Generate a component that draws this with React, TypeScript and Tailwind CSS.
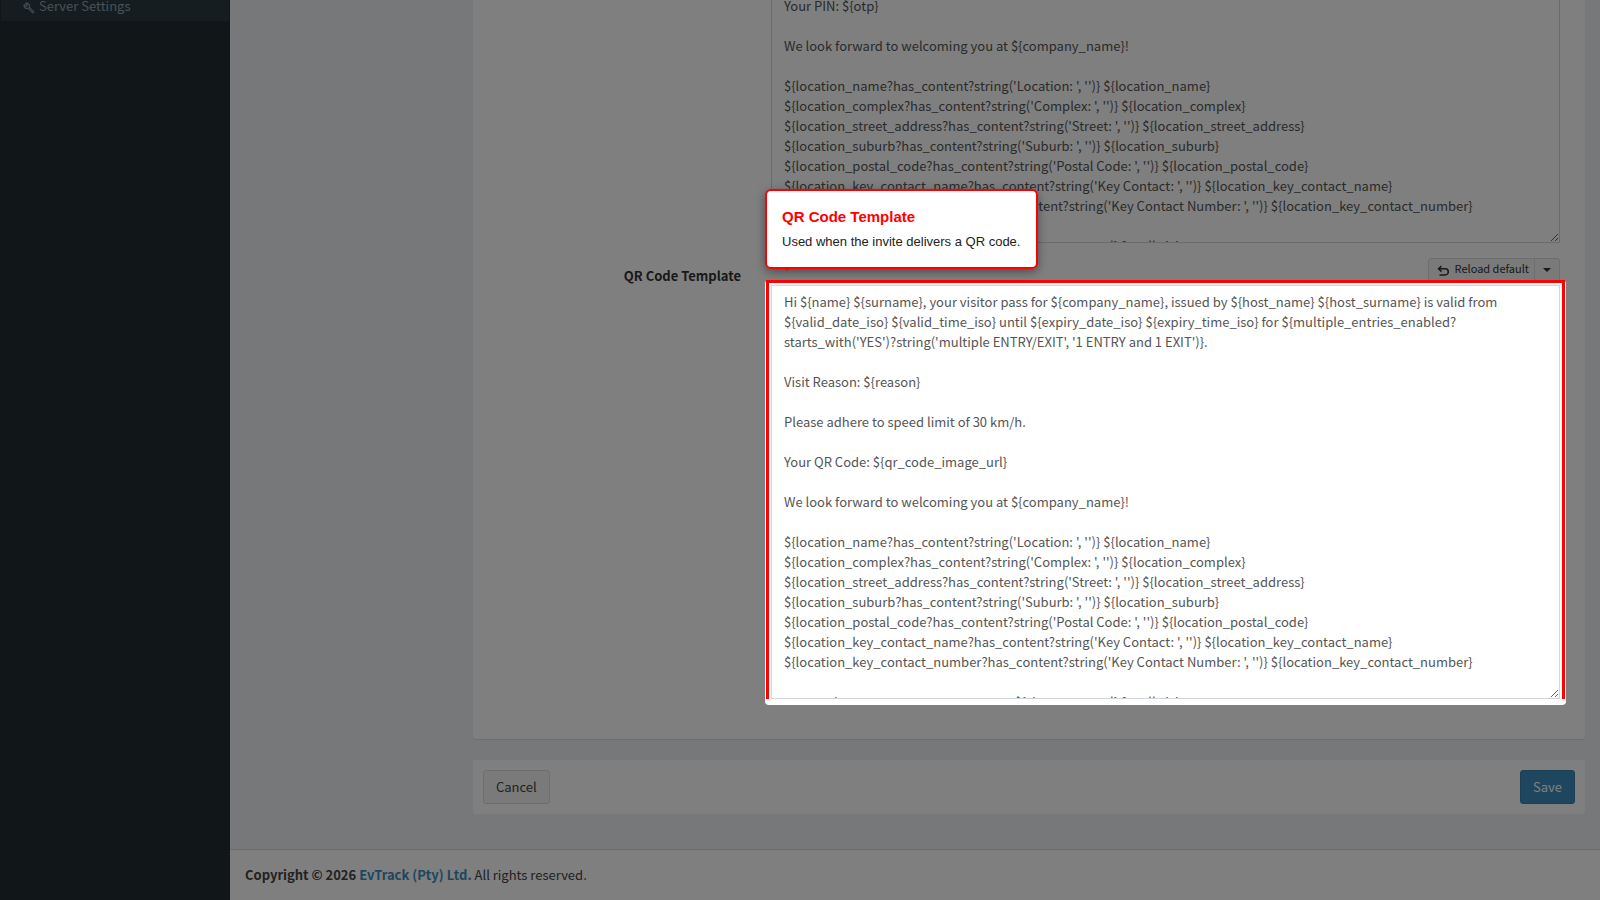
import { useState } from 'react';
import { MdOutlineBuild } from 'react-icons/md';

const sharedTail = `We look forward to welcoming you at \${company_name}!

\${location_name?has_content?string('Location: ', '')} \${location_name}
\${location_complex?has_content?string('Complex: ', '')} \${location_complex}
\${location_street_address?has_content?string('Street: ', '')} \${location_street_address}
\${location_suburb?has_content?string('Suburb: ', '')} \${location_suburb}
\${location_postal_code?has_content?string('Postal Code: ', '')} \${location_postal_code}
\${location_key_contact_name?has_content?string('Key Contact: ', '')} \${location_key_contact_name}
\${location_key_contact_number?has_content?string('Key Contact Number: ', '')} \${location_key_contact_number}

uses and entry terms are on our page: \${site_terms_url} for all visitors`;

const intro = `Hi \${name} \${surname}, your visitor pass for \${company_name}, issued by \${host_name} \${host_surname} is valid from \${valid_date_iso} \${valid_time_iso} until \${expiry_date_iso} \${expiry_time_iso} for \${multiple_entries_enabled?starts_with('YES')?string('multiple ENTRY/EXIT', '1 ENTRY and 1 EXIT')}.

Visit Reason: \${reason}

Please adhere to speed limit of 30 km/h.`;

const pinTemplate = `${intro}

Your PIN: \${otp}

${sharedTail}`;

const qrTemplate = `${intro}

Your QR Code: \${qr_code_image_url}

${sharedTail}`;

function ReloadButtons({ onReload }: { onReload: () => void }) {
  return (
    <div className="flex justify-end text-[11px] leading-[18px] text-[#333]">
      <button
        type="button"
        onClick={onReload}
        className="flex h-6 items-start gap-1.5 rounded-l-[3px] border border-[#ddd] bg-[#f4f4f4] pl-2 pr-[5px]"
      >
        <svg viewBox="0 0 12 12" className="mt-1.5 h-3 w-3" fill="none" stroke="currentColor" strokeWidth="1.5">
          <path d="M4.500 1 1.500 3.800l3 2.800M1.500 3.800H8.200a2.900 2.900 0 0 1 0 6.200H2.500" />
        </svg>
        Reload default
      </button>
      <button
        type="button"
        aria-label="More reload options"
        className="-ml-px flex h-6 w-[26px] items-center justify-center rounded-r-[3px] border border-[#ddd] bg-[#f4f4f4]"
      >
        <span className="border-x-4 border-t-4 border-x-transparent border-t-[#333]" />
      </button>
    </div>
  );
}

export default function App() {
  const [pin, setPin] = useState(pinTemplate);
  const [qr, setQr] = useState(qrTemplate);

  return (
    <div className="flex h-screen overflow-hidden bg-[#ecf0f5] font-['Source_Sans_Pro','Noto_Sans_CJK_SC',sans-serif] text-[13px] leading-5 text-[#333]">
      <aside className="w-[230px] shrink-0 bg-[#222d32]">
        <nav className="px-px">
          <a href="#server" className="flex h-[21px] items-start gap-1 bg-[#2c3b41] pl-[22px] leading-3 text-[#8aa4af]">
            <MdOutlineBuild className="mt-0.5 h-3 w-3" />
            Server Settings
          </a>
        </nav>
      </aside>

      <div className="flex min-w-0 flex-1 flex-col justify-end">
        <form className="pb-[35px] pl-[243px] pr-[15px]" onSubmit={(e) => e.preventDefault()}>
          <section className="rounded-[3px] bg-white pb-10 shadow-[0_1px_1px_rgba(0,0,0,0.1)]">
            <div className="flex pl-5 pr-[25px]">
              <div className="w-[278px] shrink-0" />
              <textarea
                aria-label="PIN Template"
                value={pin}
                onChange={(e) => setPin(e.target.value)}
                className="block h-[414px] min-w-0 flex-1 resize overflow-hidden border border-[#d2d6de] bg-white px-3 py-1.5 text-[#555]"
              />
            </div>

            <div className="flex pl-5 pr-[25px] pt-[15px]">
              <label htmlFor="qr-template" className="w-[278px] shrink-0 pr-[30px] pt-2 text-right font-bold">
                QR Code Template
              </label>
              <div className="min-w-0 flex-1">
                <ReloadButtons onReload={() => setQr(qrTemplate)} />
                {/* the spotlight's oversized shadow dims the rest of the page */}
                <div className="relative z-10 mt-[3px]">
                  <div className="absolute -inset-x-1.5 -bottom-1.5 -top-[5px] rounded bg-white shadow-[0_0_0_5000px_rgba(0,0,0,0.5)]" />
                  <div className="absolute -inset-x-[5px] -top-[5px] bottom-0 border-x-[3px] border-t-[3px] border-[#f00]" />
                  <textarea
                    id="qr-template"
                    value={qr}
                    onChange={(e) => setQr(e.target.value)}
                    className="relative block h-[414px] w-full resize overflow-hidden border border-[#d2d6de] bg-white px-3 py-1.5 text-[#555]"
                  />
                  <div
                    role="tooltip"
                    className="absolute -left-1.5 bottom-full mb-4 rounded-md border-2 border-[#f00] bg-white pb-[15px] pl-[15px] pr-4 pt-4 font-['Liberation_Sans',sans-serif] shadow-[0_3px_10px_rgba(0,0,0,0.4)]"
                  >
                    <h3 className="text-[15px] font-bold leading-5 text-[#f00]">QR Code Template</h3>
                    <p className="mt-[5px] whitespace-nowrap text-[13px] leading-5 text-[#222]">
                      Used when the invite delivers a QR code.
                    </p>
                    <span className="absolute left-4 top-full border-x-4 border-t-4 border-x-transparent border-t-[#f00]" />
                  </div>
                </div>
              </div>
            </div>
          </section>

          <div className="mt-[21px] flex justify-between rounded-[3px] bg-white p-2.5">
            <button type="button" className="h-[34px] rounded-[3px] border border-[#ddd] bg-[#f4f4f4] px-3 text-[#444]">
              Cancel
            </button>
            <button type="submit" className="h-[34px] rounded-[3px] border border-[#367fa9] bg-[#3c8dbc] px-3 text-white">
              Save
            </button>
          </div>
        </form>

        <footer className="border-t border-[#d2d6de] bg-white p-[15px] text-[#444]">
          <strong>
            Copyright © 2026{' '}
            <a href="#evtrack" className="text-[#3c8dbc]">
              EvTrack (Pty) Ltd.
            </a>
          </strong>{' '}
          All rights reserved.
        </footer>
      </div>
    </div>
  );
}
